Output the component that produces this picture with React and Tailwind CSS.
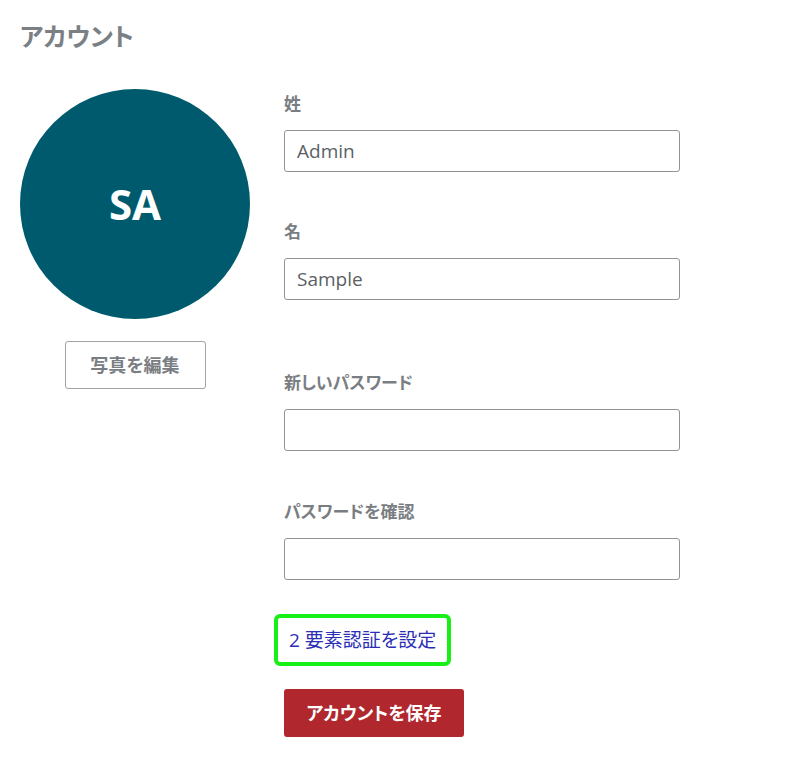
import React from "react";

const font = { fontFamily: '"Open Sans", "Noto Sans CJK JP", sans-serif' };

function Field({ label, value, className = "" }) {
  return (
    <div className={"flex flex-col " + className}>
      <label className="text-[17px] leading-[24px] font-bold text-[#7a7e83] mb-[14px] [font-feature-settings:'palt']">
        {label}
      </label>
      <input
        readOnly
        defaultValue={value}
        className="w-[396px] h-[42px] border border-[#909398] rounded-[3px] px-[12px] text-[19px] text-[#5b5f64] outline-none bg-white"
      />
    </div>
  );
}

export default function App() {
  return (
    <div style={font} className="w-[802px] h-[783px] bg-white px-[20px] pt-[16px]">
      <h1 className="text-[25px] leading-[40px] font-bold text-[#7b8085] [font-feature-settings:'palt']">
        アカウント
      </h1>
      <div className="flex mt-[33px]">
        <div className="w-[230px] flex flex-col items-center">
          <div className="w-[230px] h-[230px] rounded-full bg-[#005a6e] flex items-center justify-center">
            <span className="text-white font-bold text-[42px] leading-none">SA</span>
          </div>
          <button className="mt-[22px] w-[141px] h-[48px] border border-[#a0a3a7] rounded-[3px] bg-white text-[#7a7e83] font-bold text-[18px] [font-feature-settings:'palt']">
            写真を編集
          </button>
        </div>
        <div className="ml-[34px] pt-[3px] flex flex-col">
          <Field label="姓" value="Admin" />
          <Field label="名" value="Sample" className="mt-[48px]" />
          <Field label="新しいパスワード" value="" className="mt-[71px]" />
          <Field label="パスワードを確認" value="" className="mt-[49px]" />
          <div className="mt-[38px] -ml-[6px]">
            <a
              href="#"
              className="inline-block px-[11px] py-[8px] outline-[4px] outline-solid outline-[#16f016] rounded-[2px] text-[19px] leading-[28px] text-[#2b2fb5] [font-feature-settings:'palt']"
            >
              2 要素認証を設定
            </a>
          </div>
          <button className="mt-[27px] w-[180px] h-[48px] rounded-[3px] bg-[#b0272e] text-white font-bold text-[18px] [font-feature-settings:'palt']">
            アカウントを保存
          </button>
        </div>
      </div>
    </div>
  );
}
